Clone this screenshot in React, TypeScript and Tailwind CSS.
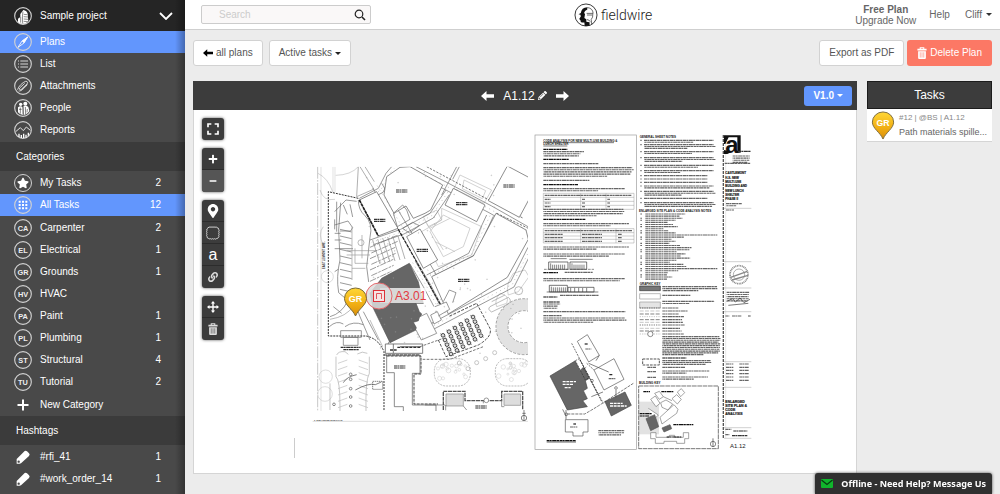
import React from "react";
import { FaLink, FaMapMarkerAlt, FaMinus, FaPlus, FaStar, FaPencilAlt } from "react-icons/fa";
import { MdFullscreen } from "react-icons/md";

type Pt = [number, number];

const trades = [
  { code: "CA", name: "Carpenter", count: 2 },
  { code: "EL", name: "Electrical", count: 1 },
  { code: "GR", name: "Grounds", count: 1 },
  { code: "HV", name: "HVAC" },
  { code: "PA", name: "Paint", count: 1 },
  { code: "PL", name: "Plumbing", count: 1 },
  { code: "ST", name: "Structural", count: 4 },
  { code: "TU", name: "Tutorial", count: 2 },
];

/* ---------- icons ---------- */

function Ring({ children }: { children?: React.ReactNode }) {
  return (
    <svg viewBox="0 0 54 54" className="size-[18px] shrink-0" fill="none" stroke="#fff" aria-hidden="true">
      <circle cx="27" cy="27" r="25" stroke="#d2d2d2" strokeWidth="3.4" />
      {children}
    </svg>
  );
}

function ProjectIcon() {
  return (
    <Ring>
      <path d="M12 46V35l7-5v-9l9-12c7 1 12 6 13 11l2 22-9 8H20z" fill="#fff" stroke="none" />
      <path d="M20 30v17M27 14c-2 10-2 20-1 35M29 22l11 1M29 29l13 1M29 36l13 1M29 43l12 1" stroke="#252525" strokeWidth="1.600" />
    </Ring>
  );
}

function PlansIcon() {
  return (
    <Ring>
      <path d="M41 12 30 30 24 24z" fill="#fff" strokeWidth="1" />
      <path d="M41 12 30 30 12 43 24 24z" strokeWidth="2.5" />
    </Ring>
  );
}

function ListIcon() {
  return (
    <Ring>
      <path d="M19 18h23M19 27h23M19 36h23" stroke="#d8d8d8" strokeWidth="3" />
      <path d="M12 18h3M12 27h3M12 36h3" stroke="#d8d8d8" strokeWidth="3" />
    </Ring>
  );
}

function AttachIcon() {
  return (
    <Ring>
      <path
        d="M11 37c2-9 15-21 24-24 7-1 7 5 3 9L23 36c-4 4-9 2-6-3l14-13M15 42c6 1 12-5 24-18M21 40l18-18"
        stroke="#d8d8d8"
        strokeWidth="3"
        strokeLinecap="round"
      />
    </Ring>
  );
}

function PeopleIcon() {
  return (
    <Ring>
      <g fill="#fff" stroke="none">
        <circle cx="20" cy="16" r="5" />
        <circle cx="34" cy="14" r="6" />
        <path d="M12 25q8-6 14 0l1 22q-9 1-15-7zM28 22q8-4 15 2l3 12q-6 11-17 12z" />
      </g>
      <path d="M19 26v18M34 24l1 22M27 22v24M23 31h-8M40 30l-1 10" stroke="#494949" strokeWidth="2" />
    </Ring>
  );
}

function ReportsIcon() {
  return (
    <Ring>
      <path d="m5 32 14-12 9 9 9-11 12 10" stroke="#e4e4e4" strokeWidth="3" />
      <path d="M15 38v10M22 42v9M29 38v13M36 41v9M43 35v9" strokeWidth="4" />
    </Ring>
  );
}

function TagIcon() {
  return (
    <svg viewBox="0 0 54 54" className="size-[18px] shrink-0" aria-hidden="true">
      <path d="M8 47V33L32 9q4-2 7 1l6 6q4 4 0 8L21 46q-3 2-6 1z" fill="#fff" />
      <circle cx="14" cy="41" r="3.5" fill="#494949" />
    </svg>
  );
}

function ArrowGlyph({ right, className }: { right?: boolean; className: string }) {
  return (
    <svg viewBox="0 0 13 10" className={className} fill="currentColor" aria-hidden="true">
      <path d={right ? "M13 5 7.5 0v3.3H0v3.4h7.5V10z" : "M0 5 5.5 0v3.3H13v3.4H5.5V10z"} />
    </svg>
  );
}

function Caret() {
  return (
    <svg viewBox="0 0 6 3" className="h-[3px] w-[6px]" fill="currentColor" aria-hidden="true">
      <path d="M0 0h6L3 3z" />
    </svg>
  );
}

function TrashGlyph({ className, gap }: { className: string; gap: string }) {
  return (
    <svg viewBox="0 0 28 34" className={className} aria-hidden="true">
      <path d="M9 6V2h10v4" fill="none" stroke="currentColor" strokeWidth="3" />
      <path d="M1 5h26v5H1zM3 12h22v19q0 3-3 3H6q-3 0-3-3z" fill="currentColor" />
      <path d="M9 15v15M14 15v15M19 15v15" stroke={gap} strokeWidth="1.6" />
    </svg>
  );
}

function MoveGlyph() {
  return (
    <svg viewBox="0 0 34 34" className="size-3" fill="currentColor" aria-hidden="true">
      <path d="m17 0 6 7h-4v8h8v-4l7 6-7 6v-4h-8v8h4l-6 7-6-7h4v-8H7v4l-7-6 7-6v4h8V7h-4z" />
    </svg>
  );
}

function CloudGlyph() {
  return (
    <svg viewBox="0 0 42 42" className="size-[14px]" fill="none" stroke="#e6e6e6" strokeWidth="2.6" aria-hidden="true">
      <path d="M9 4q3-3 6 0 3-3 6 0 3-3 6 0 4-3 6 1 5 0 5 5 3 3 0 6 3 3 0 6 3 3 0 6 3 5-1 6-1 4-6 4-3 3-6 0-3 3-6 0-3 3-6 0-4 2-6-1-4 0-4-6-3-3 0-6-3-3 0-6-3-3 0-6-2-5 2-6 0-3 4-3z" />
    </svg>
  );
}

function FieldwireMark() {
  return (
    <svg viewBox="346 8 74 74" className="size-6" aria-hidden="true">
      <circle cx="383" cy="45" r="34" fill="#fff" stroke="#333" strokeWidth="3" />
      <path d="M367 39q2-17 20-18v7q-9 3-10 11l3 3-2 12 6 4v8l10 1v11l-15 1-1-11q-13 2-12-7l-4-4 5-7-1-6-6-1z" fill="#111" />
      <path d="M387 22q17 2 18 18h-20M404 41q1 12-5 18l2 16M386 45h16M386 59q7 1 11 7" fill="none" stroke="#333" strokeWidth="2.2" />
    </svg>
  );
}

function PinShape() {
  return (
    <>
      <path d="M12 29C9 22 1 18 1 11.500a11 10.500 0 0 1 22 0C23 18 15 22 12 29z" fill="url(#pinGold)" stroke="#7a6a3a" />
      <text x="12" y="15" textAnchor="middle" fontSize="9" fontWeight="700" fill="#fff" fontFamily="Liberation Sans, Arial, sans-serif">
        GR
      </text>
    </>
  );
}

function Gold() {
  return (
    <defs>
      <linearGradient id="pinGold" x1="0" y1="0" x2="0" y2="1">
        <stop offset="0" stopColor="#ffd736" />
        <stop offset="0.6" stopColor="#f0ad12" />
        <stop offset="1" stopColor="#d98e0b" />
      </linearGradient>
    </defs>
  );
}

/* ---------- plan drawing ---------- */

const noise = (n: number) => {
  const v = Math.sin(n * 12.9898) * 43758.5453;
  return v - Math.floor(v);
};

/** Rows of fine print, too small to read at this zoom level. */
function Print({ x, y, w, n = 1, gap = 6.4, tone = "#666", full }: { x: number; y: number; w: number; n?: number; gap?: number; tone?: string; full?: boolean }) {
  return (
    <g stroke={tone} strokeWidth="3.4" strokeDasharray="9 1 5 1.500 13 1 7 1.500">
      {Array.from({ length: n }, (_, i) => {
        const k = full && i < n - 1 ? 0.95 + noise(i + x) * 0.05 : 0.5 + noise(i * 3 + x + y) * 0.45;
        return <line key={i} x1={x} x2={x + w * (n === 1 ? 1 : k)} y1={y + i * gap} y2={y + i * gap} strokeDashoffset={i * 7} />;
      })}
    </g>
  );
}

function Walk({ pts, off }: { pts: Pt[]; off: Pt }) {
  const a = pts.map((p) => p.join(",")).join(" ");
  const b = pts.map((p) => `${p[0] + off[0]},${p[1] + off[1]}`).join(" ");
  const mid = pts.map((p) => `${p[0] + off[0] / 2},${p[1] + off[1] / 2}`).join(" ");
  return (
    <g fill="none">
      <polyline points={a} />
      <polyline points={b} />
      <polyline points={mid} stroke="#888" strokeWidth="1.500" strokeDasharray="3 11" />
    </g>
  );
}

function SitePlan() {
  const tables: Pt[] = [];
  for (let c = 0; c < 6; c++) for (let r = 0; r < 5; r++) tables.push([399 + c * 18 + r * 6, 526 - c * 11 + r * 14]);
  const rooms: Pt[] = [[258, 90], [438, 128], [580, 75], [192, 178], [320, 268], [444, 358], [252, 618], [496, 738]];
  return (
    <g transform="translate(310 160) scale(0.33333)" stroke="#666" strokeWidth="2" fill="none">
      <clipPath id="siteClip">
        <rect x="8" y="20" width="646" height="733" />
      </clipPath>
      <g clipPath="url(#siteClip)">
        {/* street edge and property line */}
        <g stroke="#aaa">
          <path d="M23 20v733" strokeDasharray="36 4 5 4" />
          <path d="M69 20v80M75 20v76M33 20v733" strokeWidth="1" />
          <path d="M24 40q30 15 44 55M145 20q-22 25-68 26M30 90q10 35 45 28M40 200q-18 22 0 55" strokeWidth="1.500" />
          <g stroke="#ccc">
            <circle cx="47" cy="650" r="20" /><circle cx="45" cy="702" r="22" /><circle cx="52" cy="350" r="18" />
          </g>
        </g>
        <path d="M145 115 55 95V528H168Q205 535 222 575V753" stroke="#333" strokeWidth="3" strokeDasharray="6 3" />

        {/* west parking */}
        <path d="M92 128 86 210 90 300Q78 350 86 398L112 420M145 120Q145 150 164 166 190 190 180 232L170 320 176 366M74 155 108 120 140 124M74 195l40-12 14 20-6 10H90M74 178v30M80 125v90" />
        <path d="M100 135l12 28M120 133l8 38M74 220h18M74 240h20M74 266h55M74 335l12-8" />
        {Array.from({ length: 10 }, (_, i) => (
          <path key={i} d={`M90 ${208 + i * 20}l35 8`} />
        ))}
        <path d="M126 200v160M156 225v70M144 248a9 9 0 1 0 18 0 9 9 0 1 0-18 0M110 272h90M110 285h70M135 265v45h40M126 325h40" stroke="#999" />

        {/* entry drive */}
        <path d="M60 470Q95 460 112 425M58 500Q80 480 100 492M150 470 180 540M160 455 205 540M135 430 150 470M92 512h62v20H92zM100 532h44v24h-44zM70 440l25 20M105 500q25-18 55-6" />
        <path d="M60 478q50-8 70-40M180 480 218 560" stroke="#999" />

        {/* north lawns */}
        <g stroke="#bbb">
          <path d="M450 45 545 90 522 130 432 86zM462 60l65 32-10 24-60-30z" />
          <path d="M395 145 515 200 485 285 385 320 335 215 395 180zM400 165l80 40-20 55-60 30-40-75z" />
          <path d="M340 170l40-20 15 30-40 20zM580 180l50 25-10 20-50-22zM350 190l50 80M360 205l60-30M375 245l60 30" />
          <path d="M610 340l35-10 12 20-32 45-30 10q-10-30 15-65zM570 400q30 5 20 30l-30 10q-8-20 10-40z" />
        </g>

        {/* walkways */}
        <Walk pts={[[188, 84], [262, 205], [362, 375], [404, 455]]} off={[27, -14]} />
        <Walk pts={[[318, 20], [412, 68], [545, 138], [654, 200]]} off={[-8, 20]} />
        <Walk pts={[[148, 115], [205, 85], [228, 40], [245, 20]]} off={[14, 12]} />
        <Walk pts={[[408, 90], [360, 160], [272, 208], [180, 240]]} off={[10, 14]} />
        <Walk pts={[[530, 165], [476, 280], [350, 345]]} off={[20, 4]} />
        <Walk pts={[[654, 262], [602, 365], [425, 458], [345, 500]]} off={[10, 16]} />
        <Walk pts={[[300, 312], [340, 380], [372, 440]]} off={[16, -8]} />
        <path d="M145 20 140 110M150 20l42 68M165 20l28 45M140 110l50-22" stroke="#888" />
        <path d="M265 208 405 458" stroke="#222" strokeWidth="3.500" strokeDasharray="10 3" />
        <path d="M440 20l-45 85M448 20l-20 38" />
        <path d="M350 20 640 175M560 160l95 45" stroke="#333" strokeDasharray="7 4" />

        {/* terraces between the lot and the main walk */}
        {Array.from({ length: 7 }, (_, i) => (
          <path key={i} d={`M${180 + (i % 2) * 4} ${262 + i * 17}l${82 - i * 3} -${36 - i}`} strokeDasharray="20 3 8 3" />
        ))}
        {Array.from({ length: 6 }, (_, i) => (
          <path key={i} d={`M${188 + i * 15} ${240 - i * 3}l22 72`} stroke="#888" />
        ))}

        {/* buildings in outline */}
        <g fill="#fff" stroke="#555">
          <path d="M148 120 200 95 264 205 205 228z" />
          <path d="M230 50 270 22 300 20 398 75 362 150 345 160 310 175 288 138 252 160 222 105z" />
          <path d="M430 85 525 135 500 185 405 135z" />
          <path d="M592 18 656 52V120L628 172 535 122z" />
          <path d="M290 230 330 207 383 300 340 325z" />
          <path d="M558 160 648 210 655 238 592 352 415 462 365 350 490 288z" />
          <path d="M230 585H330V640H307V735H378V760H280V740H253V638H230z" />
        </g>
        <path d="M148 120 205 228" stroke="#222" strokeWidth="5" strokeDasharray="10 2" />
        <path d="M230 588H333V642H312V732H384M222 585h108" stroke="#444" strokeWidth="3" strokeDasharray="9 3" />
        <path d="M250 160 278 135 290 150 300 178 262 200zM278 205l30-18 20 10-30 22z" />

        {/* new multi-use building */}
        <path d="M298 310 325 366 340 430 318 430 328 455 335 462 326 482 310 487 322 508 240 548 190 445 180 400 215 355z" fill="#666" stroke="#555" />
        <path d="M330 470l20-10 30 60-46 20-16-30M362 465l20-10 12 25-22 12zM375 440l34-14 10 22-34 20M400 425l18-35 20 8-10 30" fill="#fff" />
        <path d="M226 552h112v28H226zM250 552v28M270 560h60M234 552l8-14" strokeWidth="2.500" />
        <path d="M262 562h70M240 570h20" stroke="#333" strokeWidth="4" strokeDasharray="9 3" />

        {/* covered lunch area */}
        <path d="M385 540 408 590 505 555Q548 530 540 505L500 430 415 470" stroke="#333" strokeWidth="2.500" strokeDasharray="9 4" />
        {tables.map(([x, y], i) => (
          <g key={i}>
            <circle cx={x} cy={y} r="5.500" stroke="#333" strokeWidth="2.600" fill="#ddd" />
            <path d={`M${x - 8} ${y - 5}l3 2M${x + 8} ${y + 5}l-3 -2`} stroke="#444" />
          </g>
        ))}
        <path d="M338 598H420L520 560M330 560l70-25" stroke="#333" strokeDasharray="8 4" />

        {/* amphitheatre and planting */}
        <circle cx="642" cy="500" r="66" stroke="#e2e2e2" strokeWidth="34" />
        <circle cx="642" cy="500" r="84" stroke="#777" strokeDasharray="9 4" />
        <circle cx="642" cy="500" r="48" stroke="#777" strokeDasharray="9 4" />
        <path d="M545 425l40-20M540 440l55-28q12 10 0 20l-50 24q-14-8-5-16zM614 392a12 12 0 1 0 24 0 12 12 0 1 0-24 0" stroke="#999" />
        <rect x="373" y="596" width="108" height="82" rx="36" stroke="#999" strokeDasharray="6 3" />
        <rect x="556" y="596" width="110" height="82" rx="36" stroke="#999" strokeDasharray="6 3" />
        {Array.from({ length: 36 }, (_, i) => {
          const right = i % 2;
          return <circle key={i} cx={(right ? 566 : 384) + noise(i) * 84} cy={608 + noise(i + 50) * 58} r={2 + noise(i + 9) * 5} stroke="#ccc" strokeWidth="1.500" />;
        })}
        {[[448, 609], [500, 608], [527, 596], [474, 626], [554, 578]].map(([x, y], i) => (
          <circle key={i} cx={x} cy={y} r="6" stroke="#aaa" />
        ))}

        {/* south classrooms */}
        <path d="M400 750V694H465V722H575V694H638V750" stroke="#555" strokeWidth="4" strokeDasharray="12 2" />
        <path d="M408 702h52v36h-52zM582 702h50v34h-50z" fill="#ddd" stroke="#888" />
        <path d="M407 735v16M460 738l10 12M575 722v18h8M345 735h60M520 722v8" />
        <circle cx="529" cy="721" r="7" fill="#fff" />

        {/* south parking */}
        <path d="M60 670v80M80 585q5-12 25-10l10 8M78 590v60q12 10 12 90v15M178 590v50q-12 20-10 115M172 580q-15-8-30 2" stroke="#aaa" />
        {Array.from({ length: 8 }, (_, i) => (
          <path key={i} d={`M84 ${610 + i * 19}l28 -10M146 ${600 + i * 19}l28 10`} stroke="#bbb" />
        ))}
        <path d="M136 690q40-22 60-16l18-8M100 668q10-18 40-24" stroke="#444" />
        <path d="M188 664h30v24h-30z" stroke="#444" strokeDasharray="4 2" />
        {[[122, 643], [122, 658], [122, 686], [122, 711], [122, 738], [72, 733]].map(([x, y], i) => (
          <circle key={i} cx={x} cy={y} r="4" stroke="#555" />
        ))}

        {/* spot marks */}
        {Array.from({ length: 90 }, (_, i) => (
          <circle key={i} cx={170 + noise(i + 3) * 470} cy={30 + noise(i + 400) * 560} r="1.200" stroke="#999" strokeWidth="1.200" />
        ))}
        {rooms.map(([x, y], i) => (
          <g key={i}>
            <Print x={x} y={y} w={34} tone="#333" />
            <Print x={x} y={y + 6} w={34} tone="#333" />
          </g>
        ))}
        <Print x={92} y={562} w={60} tone="#333" />
        <Print x={100} y={569} w={46} tone="#333" />
        <text transform="translate(46 328) rotate(-90)" fontSize="9" fontWeight="700" fill="#222" stroke="none">
          EASTLEMONT AVE.
        </text>
      </g>
      <path d="M8 784H654" stroke="#ccc" />
      <text x="12" y="784" fontSize="7" fontWeight="700" fill="#333" stroke="none">
        1 &#160;ENLARGED SITE PLAN
      </text>
      <circle cx="642" cy="774" r="8" stroke="#444" />
      <path d="M642 750v32M637 760h10" stroke="#444" />
    </g>
  );
}

function NotesSheets() {
  const tableA = [190, 202, 214, 226];
  return (
    <g transform="translate(530 130) scale(0.33333)" stroke="#555" strokeWidth="2" fill="none" fontFamily="Liberation Sans, Arial, sans-serif">
      {/* code analysis */}
      <rect x="15" y="15" width="305" height="943" stroke="#999" />
      <g fill="#111" stroke="none" fontWeight="700" fontSize="9">
        <text x="40" y="36">CODE ANALYSIS FOR NEW MULTI-USE BUILDING &amp;</text>
        <text x="40" y="46">LUNCH SHELTER</text>
      </g>
      <path d="M40 38h212M40 48h72" stroke="#333" />
      <Print x={40} y={58} w={72} tone="#111" />
      <Print x={40} y={65} w={135} n={3} />
      <Print x={40} y={88} w={76} tone="#111" />
      <Print x={40} y={101} w={165} />
      <Print x={40} y={113} w={272} n={5} full />
      <Print x={40} y={151} w={138} />
      <Print x={40} y={164} w={104} tone="#111" />
      <Print x={40} y={176} w={250} n={2} full />
      <g stroke="#999" strokeWidth="1.500">
        {tableA.map((y) => <path key={y} d={`M40 ${y}H312`} />)}
        <path d="M40 190v48M152 190v48M228 190v48M312 190v48M40 238H312" />
        <path d="M40 296H312M40 308H312M40 318H312M40 328H312M40 339H312M40 296v43M152 296v43M258 296v43M312 296v43" />
      </g>
      <Print x={44} y={196} w={260} />
      {[208, 219, 230].map((y) => (
        <g key={y}><Print x={44} y={y} w={18} /><Print x={156} y={y} w={10} /><Print x={232} y={y} w={8} /></g>
      ))}
      <Print x={40} y={238} w={245} n={4} full />
      <Print x={40} y={268} w={126} tone="#111" />
      <Print x={40} y={281} w={262} n={2} full />
      <Print x={44} y={302} w={262} />
      {[313, 323, 334].map((y) => (
        <g key={y}><Print x={44} y={y} w={54} /><Print x={156} y={y} w={60} /><Print x={264} y={y} w={12} /></g>
      ))}
      <Print x={40} y={351} w={262} n={2} full />
      <Print x={40} y={372} w={250} n={2} full />
      <path d="M56 396h58v22H56zM120 396h50v22h-50z" stroke="#333" />
      <path d="M62 418v-18M68 418v-14M74 418v-14M80 418v-14M86 418v-14M92 418v-14M98 418v-14M104 418v-14M126 418v-18M132 418v-14M138 418v-14M144 418v-14M150 418v-14M156 418v-14M162 418v-14M62 386h48M118 388h70" stroke="#444" />
      <path d="M42 418h150" strokeDasharray="8 3" />
      <Print x={40} y={428} w={44} tone="#111" /><Print x={104} y={427} w={84} />
      <Print x={40} y={446} w={250} n={2} full />
      <path d="M58 466h54v20H58zM114 472h78v14h-78z" stroke="#333" />
      <path d="M64 486v-16M70 486v-14M76 486v-14M82 486v-14M88 486v-14M94 486v-14M100 486v-14M106 486v-14M122 486v-12M134 486v-12M146 486v-12M158 486v-12M170 486v-12M50 486h155" stroke="#444" />
      <Print x={40} y={501} w={42} tone="#111" /><Print x={90} y={496} w={116} />
      <Print x={40} y={516} w={50} tone="#111" />
      <Print x={40} y={522} w={74} n={3} />
      <Print x={40} y={545} w={246} />
      <Print x={40} y={557} w={56} />
      <Print x={40} y={564} w={250} n={3} full />

      {/* key plan */}
      <g strokeWidth="2">
        <path d="M142 634 172 614 208 676 176 696zM192 720 252 686 282 748 222 780z" fill="#fff" />
        <path d="M60 738 135 693 150 722 160 712 178 745 166 752 172 775 160 782 172 806 158 812 172 830 112 840z" fill="#666" stroke="#444" />
        <path d="M225 815 285 786 304 826 244 858z" fill="#666" stroke="#444" />
        <path d="M106 869h68v37h-15v12h-30v-12h-23z" fill="#fff" />
        <path d="M136 692 148 686 178 742 166 750zM125 640l90 175M150 690l70 130M170 700l22 20M184 754l18 36" stroke="#333" strokeDasharray="6 3" />
        <path d="M112 852h52q25-14 50-30l96-62M160 718l10-8" stroke="#333" strokeDasharray="9 3" />
        <path d="M108 840v28M98 838l10 20M176 700l60 26M184 800l35-14M258 780v22M208 676l-10 16" stroke="#444" />
        <circle cx="109" cy="853" r="4" /><circle cx="186" cy="752" r="4" /><circle cx="258" cy="774" r="4" />
      </g>
      <g stroke="#fff" strokeWidth="4" strokeDasharray="9 2">
        <path d="M98 755h40M98 763h32M104 773h18M240 820h38M240 828h50" />
      </g>
      <Print x={164} y={642} w={10} tone="#111" /><Print x={166} y={657} w={18} />
      <Print x={238} y={734} w={10} tone="#111" /><Print x={236} y={746} w={20} />
      <Print x={130} y={882} w={8} tone="#111" /><Print x={120} y={891} w={22} />
      <Print x={205} y={902} w={80} n={3} full />
      <Print x={50} y={932} w={88} tone="#111" /><path d="M50 936h88" stroke="#111" />

      {/* general notes */}
      <g fill="#111" stroke="none" fontWeight="700" fontSize="9">
        <text x="329" y="24">GENERAL SHEET NOTES</text>
        <text x="327" y="245">ENLARGED SITE PLAN &amp; CODE ANALYSIS NOTES</text>
        <text x="329" y="464">GRAPHIC KEY</text>
        <text x="327" y="763">BUILDING KEY</text>
      </g>
      {[[31, 2], [44, 3], [65, 2], [83, 3], [106, 2], [122, 2], [137, 1], [147, 1], [157, 1], [168, 2], [184, 3], [205, 1], [218, 3]].map(([y, n], i) => (
        <g key={i}>
          <Print x={331} y={y} w={4} />
          <Print x={342} y={y} w={n === 1 ? 190 : 216} n={n} gap={5.6} full />
        </g>
      ))}
      {Array.from({ length: 32 }, (_, i) => (
        <g key={i}>
          {i % 3 !== 1 && <Print x={331} y={252 + i * 6.3} w={5} />}
          <Print x={346} y={252 + i * 6.3} w={i === 10 || i === 26 ? 216 : 55 + noise(i + 20) * 85} />
        </g>
      ))}
      <path d="M329 468h62v14h-62z" fill="#777" stroke="#333" />
      <path d="M329 491h62v16h-62z" stroke="#999" />
      <path d="M329 516h62v18h-62z" fill="#e4e4e4" stroke="#999" />
      <Print x={397} y={470} w={168} n={3} gap={6} full />
      <Print x={397} y={496} w={84} />
      <Print x={397} y={514} w={160} n={2} full />
      {[534, 543, 552, 560, 569, 577, 585, 595, 603, 612].map((y, i) => (
        <g key={y}>
          <path d={`M329 ${y}h64`} stroke={i % 2 ? "#aaa" : "#444"} strokeDasharray={i % 3 ? "12 4" : "4 3"} />
          <Print x={397} y={y} w={48 + noise(i) * 30} />
        </g>
      ))}
      <circle cx="361" cy="612" r="8" fill="#fff" />
      <Print x={397} y={620} w={176} n={11} gap={5.4} full />
      <path d="M338 687h50v18h-50z" strokeWidth="3" strokeDasharray="8 3" />
      <Print x={397} y={684} w={72} tone="#111" />
      <Print x={397} y={692} w={148} n={3} gap={5.500} full />
      <Print x={352} y={712} w={26} /><Print x={397} y={712} w={68} />
      <Print x={352} y={725} w={26} /><Print x={397} y={723} w={144} n={2} full />
      <Print x={352} y={742} w={26} /><Print x={397} y={741} w={140} n={2} full />

      {/* building key */}
      <path d="M327 815h60v98h-60z" fill="#e2e2e2" stroke="none" />
      <rect x="326" y="768" width="239" height="188" strokeDasharray="14 2" stroke="#333" />
      <g fill="#fff" stroke="#777">
        <path d="M362 808 376 798 390 820 378 830zM374 790l14-6 12 16-12 8zM392 818l16-8 20 12-14 18-18-8zM426 806l14-12 14 14-12 14zM442 786l12-10 10 12-12 12zM355 835l30 20-14 14M400 800l26 12M390 862 432 824 444 838 440 850 396 882z" />
        <path d="M362 908h16v14h40v-6h16v6h26v-14h16v18h-12v14h-24v-6h-38v6h-26v-14h-14z" />
      </g>
      <path d="M348 866 374 854 386 890 362 902z" fill="#666" />
      <path d="M396 894 420 884 425 896 402 906z" fill="#666" />
      <Print x={340} y={785} w={20} tone="#111" /><Print x={394} y={785} w={36} tone="#111" />
      <Print x={329} y={851} w={36} tone="#111" /><Print x={329} y={858} w={28} tone="#111" />
      <Print x={430} y={884} w={60} tone="#111" /><Print x={410} y={921} w={44} tone="#111" />
      <circle cx="549" cy="942" r="8" /><path d="M549 925v26" stroke="#333" />

      {/* title block */}
      <path d="M580 15V925" stroke="#555" strokeWidth="4" strokeDasharray="9 3" />
      <path d="M587 15V925" stroke="#bbb" strokeWidth="1" />
      <path d="M582 16h50v6h-50zM582 22h14l-10 20h-4zM582 60q12 0 18 8l-8 4h-10zM622 22h10v46h-10z" fill="#111" stroke="none" />
      <text x="586" y="68" fontSize="72" fontWeight="700" fill="#111" stroke="none">a</text>
      <Print x={624} y={64} w={38} tone="#333" />
      <Print x={608} y={78} w={52} n={4} full /><Print x={584} y={100} w={78} />
      <g fill="#222" stroke="#222" strokeWidth="0.500" fontWeight="700" fontSize="9">
        <text x="586" y="133">CASTLEMONT</text>
        <text x="586" y="146">H.S. NEW</text>
        <text x="586" y="159">MULTI-USE</text>
        <text x="586" y="172">BUILDING AND</text>
        <text x="586" y="185">NEW LUNCH</text>
        <text x="586" y="198">SHELTER</text>
        <text x="586" y="211">PHASE II</text>
      </g>
      <Print x={588} y={221} w={48} n={2} full /><Print x={588} y={240} w={24} />
      <path d="M582 235h82M582 395h82M582 474h82M582 545h82M582 695h82M582 772h82M582 893h82M582 925h82" stroke="#bbb" />
      <g stroke="#888">
        <circle cx="627" cy="434" r="27" strokeWidth="5" strokeDasharray="3 2" />
        <circle cx="627" cy="434" r="17" />
        <path d="M602 442l50-18M606 450l48-14" strokeWidth="4" />
      </g>
      <Print x={590} y={487} w={68} n={5} full />
      <path d="M590 514l18-8 8 10 14-12 12 14 18-10M595 526l60-6" stroke="#333" />
      <Print x={586} y={558} w={12} /><Print x={606} y={558} w={28} /><Print x={654} y={558} w={8} />
      {[702, 712, 721, 731, 741, 751].map((y) => (
        <g key={y}><Print x={588} y={y} w={22} /><Print x={628} y={y} w={28} /></g>
      ))}
      <g fill="#222" stroke="#222" strokeWidth="0.500" fontWeight="700" fontSize="10.500">
        <text x="586" y="820">ENLARGED</text>
        <text x="586" y="832">SITE PLAN &amp;</text>
        <text x="586" y="844">CODE</text>
        <text x="586" y="856">ANALYSIS</text>
      </g>
      <Print x={586} y={898} w={18} /><Print x={610} y={903} w={42} tone="#333" />
      <Print x={586} y={914} w={12} /><Print x={606} y={917} w={46} tone="#333" />
      <text x="600" y="953" fontSize="18" fill="#222" stroke="none">A1.12</text>
    </g>
  );
}

function PlanDrawing() {
  return (
    <svg viewBox="194 110 662 363" className="block h-auto w-full" role="img" aria-label="Plan A1.12" fontFamily="Liberation Sans, Arial, sans-serif">
      <Gold />
      <SitePlan />
      <NotesSheets />
      <path d="M294.500 438v20" stroke="#ccc" />
      <rect x="380" y="288" width="46" height="15" fill="#fff" opacity="0.750" />
      <circle cx="379" cy="296" r="13" fill="#ddd" fillOpacity="0.850" stroke="#e5686d" />
      <rect x="373.500" y="290.500" width="11" height="11" fill="#f6e4e4" stroke="#dd3039" />
      <path d="M376.500 299v-5.500h5v5.500" fill="none" stroke="#e0555c" />
      <text x="395" y="300" fontSize="12" fill="#e23a42">A3.01</text>
      <g transform="translate(343.500 287)">
        <PinShape />
      </g>
    </svg>
  );
}

/* ---------- shell ---------- */

function SideRow({ icon, label, count, active }: { icon: React.ReactNode; label: string; count?: number; active?: boolean }) {
  return (
    <li>
      <a href="#" className={`flex h-[22px] items-center gap-2 pr-6 pl-3.5 ${active ? "bg-[#6296fd]" : ""}`}>
        {icon}
        <span className="flex-1">{label}</span>
        {count !== undefined && <span>{count}</span>}
      </a>
    </li>
  );
}

function Initials({ code }: { code: string }) {
  return (
    <Ring>
      <text x="27" y="35" textAnchor="middle" fontSize="22" fontWeight="700" fill="#eee" stroke="none">
        {code}
      </text>
    </Ring>
  );
}

function Sidebar() {
  return (
    <nav className="relative w-[185px] shrink-0 bg-[#494949] text-[10px] leading-3 text-white" aria-label="Project">
      <button type="button" className="flex h-[31px] w-full items-center gap-2 bg-[#252525] pr-3 pl-3.5 text-left">
        <ProjectIcon />
        <span className="flex-1">Sample project</span>
        <svg viewBox="0 0 14 8" className="h-2 w-3.5" fill="none" stroke="#fff" strokeWidth="1.800" aria-hidden="true">
          <path d="m1 1 6 6 6-6" />
        </svg>
      </button>
      <ul className="pb-px">
        <SideRow icon={<PlansIcon />} label="Plans" active />
        <SideRow icon={<ListIcon />} label="List" />
        <SideRow icon={<AttachIcon />} label="Attachments" />
        <SideRow icon={<PeopleIcon />} label="People" />
        <SideRow icon={<ReportsIcon />} label="Reports" />
      </ul>
      <h2 className="flex h-[29px] items-center bg-[#3b3b3b] px-4">Categories</h2>
      <div className="flex flex-col gap-px pt-px">
        <ul>
          <SideRow
            icon={
              <span className="flex size-[18px] items-center justify-center rounded-full border border-[#d2d2d2]">
                <FaStar className="size-3" />
              </span>
            }
            label="My Tasks"
            count={2}
          />
          <SideRow
            icon={
              <Ring>
                <path d="M14 17h26M14 27h26M14 37h26" strokeWidth="6" strokeDasharray="6 4" />
              </Ring>
            }
            label="All Tasks"
            count={12}
            active
          />
        </ul>
        <ul>
          {trades.map((t) => (
            <SideRow key={t.code} icon={<Initials code={t.code} />} label={t.name} count={t.count} />
          ))}
        </ul>
        <button type="button" className="flex h-[22px] w-full items-center gap-2 pl-3.5 text-left">
          <svg viewBox="0 0 18 18" className="size-[18px]" stroke="#fff" strokeWidth="2" aria-hidden="true">
            <path d="M9 3.500v11M3.500 9h11" />
          </svg>
          New Category
        </button>
      </div>
      <h2 className="flex h-[29px] items-center bg-[#3b3b3b] px-4">Hashtags</h2>
      <ul className="pt-px">
        <SideRow icon={<TagIcon />} label="#rfi_41" count={1} />
        <SideRow icon={<TagIcon />} label="#work_order_14" count={1} />
      </ul>
      <div className="pointer-events-none absolute inset-y-0 right-0 w-2.5 bg-gradient-to-l from-black/30 to-transparent" />
    </nav>
  );
}

function TopBar() {
  return (
    <header className="flex h-[30px] items-center justify-between border-b border-[#cfcfcf] bg-white pr-2 pl-4 text-[10px] leading-[11px] text-[#666]">
      <label className="flex h-[19px] w-[170px] items-center rounded-xs border border-[#ccc] bg-[#faf8f8] pr-1 pl-[17px]">
        <span className="sr-only">Find</span>
        <input type="text" placeholder="Search" className="h-4 min-w-0 flex-1 bg-transparent leading-4 outline-none placeholder:text-[#ccc]" />
        <svg viewBox="0 0 12 12" className="size-3" fill="none" stroke="#222" aria-hidden="true">
          <circle cx="5" cy="5" r="3.800" strokeWidth="1.200" />
          <path d="m8 8 3 3" strokeWidth="1.600" />
        </svg>
      </label>
      <a href="#" className="flex items-center gap-[3px] font-['Roboto',sans-serif] text-[14px] leading-5 font-light text-[#222]">
        <FieldwireMark />
        fieldwire
      </a>
      <div className="flex items-center gap-[13px]">
        <a href="#" className="text-center">
          <strong className="block">Free Plan</strong>
          Upgrade Now
        </a>
        <a href="#">Help</a>
        <button type="button" aria-haspopup="menu" className="flex items-center gap-1 pl-0.5">
          Cliff <span className="text-[#333]"><Caret /></span>
        </button>
      </div>
    </header>
  );
}

const plainButton = "flex h-[26px] items-center gap-[3px] rounded-[3px] border border-[#d2d2d2] bg-white px-[9px]";
const tool = "flex size-[22px] items-center justify-center";
const toolGroup = "flex flex-col divide-y divide-[#2c2c2c] overflow-hidden rounded-[3px] bg-[#3c3c3c] text-white shadow-[0_0_3px_#555]";

function MapTools() {
  return (
    <div className="absolute top-2 left-2 flex flex-col gap-2">
      <div className={toolGroup}>
        <button type="button" aria-label="Full screen" className={tool}><MdFullscreen className="size-5" /></button>
      </div>
      <div className={toolGroup}>
        <button type="button" aria-label="Zoom in" className={tool}><FaPlus className="size-2.5" /></button>
        <button type="button" aria-label="Zoom out" className="flex size-[22px] items-center justify-center bg-[#555]"><FaMinus className="size-2" /></button>
      </div>
      <div className={toolGroup}>
        <button type="button" aria-label="Add task" className={tool}><FaMapMarkerAlt className="size-3.5" /></button>
        <button type="button" aria-label="Draw cloud" className={tool}><CloudGlyph /></button>
        <button type="button" aria-label="Add text" className="flex size-[22px] items-center justify-center text-[16px] leading-4">a</button>
        <button type="button" aria-label="Add link" className={tool}><FaLink className="size-2.5 text-[#ddd]" /></button>
      </div>
      <div className={toolGroup}>
        <button type="button" aria-label="Move" className={tool}><MoveGlyph /></button>
        <button type="button" aria-label="Delete" className={tool}><TrashGlyph className="h-3 w-2.5 text-[#ddd]" gap="#3c3c3c" /></button>
      </div>
    </div>
  );
}

export default function App() {
  return (
    <div className="flex min-h-screen bg-[#ececec] font-['Liberation_Sans',Arial,sans-serif]">
      <Sidebar />
      <div className="min-w-0 flex-1">
        <TopBar />
        <main className="px-2 pt-2.5">
          <div className="flex items-center justify-between text-[10px] leading-3 text-[#555]">
            <div className="flex gap-1.5">
              <button type="button" className={plainButton}>
                <ArrowGlyph className="h-2 w-2.5 text-black" />
                all plans
              </button>
              <button type="button" aria-haspopup="menu" className={plainButton}>
                Active tasks <span className="text-[#222]"><Caret /></span>
              </button>
            </div>
            <div className="flex gap-[3px]">
              <button type="button" className={plainButton}>Export as PDF</button>
              <button type="button" className="flex h-[26px] items-center gap-[3px] rounded-[3px] bg-[#fc7865] px-2.5 text-white">
                <TrashGlyph className="h-3 w-2.5" gap="#fc7865" />
                Delete Plan
              </button>
            </div>
          </div>
          <div className="mt-[15px] flex items-start gap-2.5">
            <section className="min-w-0 flex-1 border border-[#d5d5d5] bg-white">
              <div className="-mx-px -mt-px grid h-[29px] grid-cols-[1fr_auto_1fr] items-center bg-[#3c3c3c] text-white">
                <span />
                <div className="flex items-center gap-[9px]">
                  <button type="button" aria-label="Previous plan"><ArrowGlyph className="h-2.5 w-[13px]" /></button>
                  <h1 className="flex items-center gap-[3px] text-[12px] leading-4">
                    A1.12 <FaPencilAlt className="size-[9px]" />
                  </h1>
                  <button type="button" aria-label="Next plan"><ArrowGlyph right className="h-2.5 w-[13px]" /></button>
                </div>
                <button type="button" aria-haspopup="menu" className="mr-[5px] flex h-5 items-center gap-[3px] justify-self-end rounded-[3px] bg-[#6296fd] px-[9px] text-[10px] leading-3 font-bold">
                  V1.0 <Caret />
                </button>
              </div>
              <div className="relative">
                <PlanDrawing />
                <MapTools />
              </div>
            </section>
            <aside className="w-[125px] shrink-0 border-b border-[#d5d5d5] bg-white">
              <h2 className="flex h-7 items-center justify-center border border-[#1c1c1c] bg-[#3c3c3c] text-[12px] leading-4 text-white">Tasks</h2>
              <a href="#" className="flex h-8 items-center gap-1 pl-1 text-[9px] leading-[14px] text-[#666]">
                <svg viewBox="0 0 24 30" className="h-[29px] w-6 shrink-0" aria-hidden="true">
                  <PinShape />
                </svg>
                <span className="flex-1 whitespace-nowrap">
                  <span className="block text-[8px] text-[#888]">#12 | @BS | A1.12</span>
                  <span className="block">Path materials spille...</span>
                </span>
              </a>
            </aside>
          </div>
        </main>
      </div>
      <button type="button" className="fixed right-2 bottom-0 flex h-[21px] items-center gap-2 rounded-t-[3px] bg-[#303030] px-1.5 font-['Noto_Sans',sans-serif] text-[9px] leading-4 font-bold text-white shadow-[0_0_3px_#444]">
        <svg viewBox="0 0 12 9" className="h-[9px] w-3" aria-hidden="true">
          <rect width="12" height="9" rx="1" fill="#10b52c" />
          <path d="m0.500 1 5.500 4.500L11.500 1" fill="none" stroke="#063d10" strokeWidth="1.300" />
        </svg>
        <span>Offline - Need Help? Message Us</span>
      </button>
    </div>
  );
}
